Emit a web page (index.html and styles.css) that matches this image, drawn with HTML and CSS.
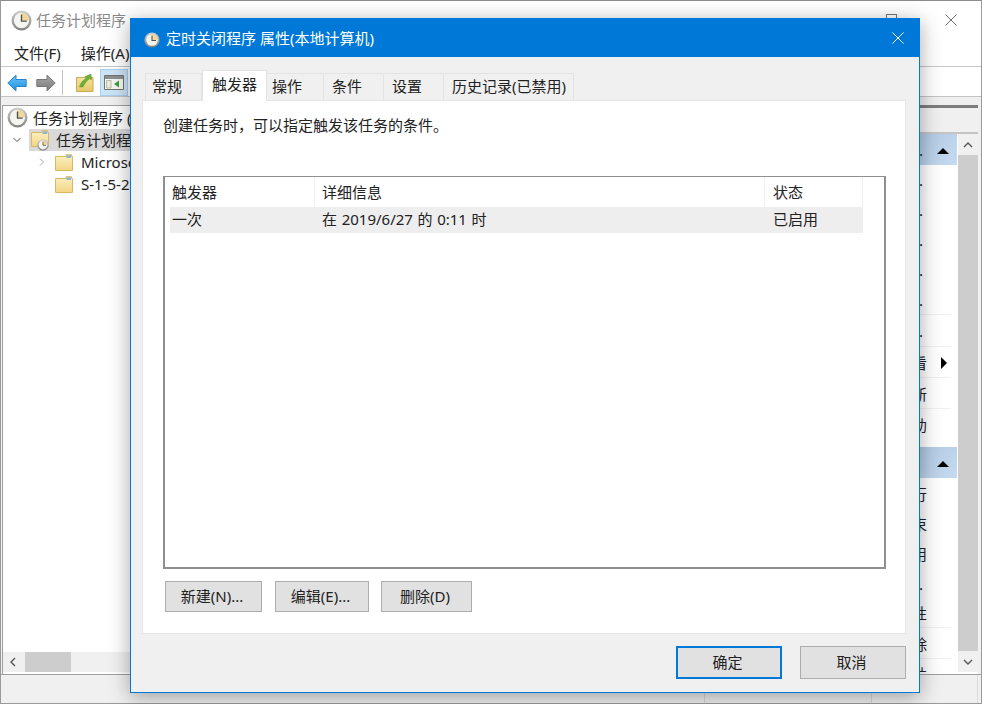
FILE: index.html
```html
<!DOCTYPE html>
<html lang="zh-CN">
<head>
<meta charset="utf-8">
<title>任务计划程序</title>
<link rel="stylesheet" href="styles.css">
</head>
<body>
<svg width="0" height="0" class="defs">
  <defs>
    <linearGradient id="clockRim" x1="0" y1="0" x2="0" y2="1">
      <stop offset="0" stop-color="#cfcfcf"/>
      <stop offset="1" stop-color="#808080"/>
    </linearGradient>
    <linearGradient id="folderFill" x1="0" y1="0" x2="0" y2="1">
      <stop offset="0" stop-color="#fdf1c4"/>
      <stop offset="1" stop-color="#f2d583"/>
    </linearGradient>
    <linearGradient id="upFill" x1="0" y1="0" x2="0" y2="1">
      <stop offset="0" stop-color="#f6e3a0"/>
      <stop offset="1" stop-color="#e6c768"/>
    </linearGradient>
    <linearGradient id="backFill" x1="0" y1="0" x2="0" y2="1">
      <stop offset="0" stop-color="#6cc4f7"/>
      <stop offset="1" stop-color="#1f8fe0"/>
    </linearGradient>
    <linearGradient id="fwdFill" x1="0" y1="0" x2="0" y2="1">
      <stop offset="0" stop-color="#a8a8a8"/>
      <stop offset="1" stop-color="#7c7c7c"/>
    </linearGradient>
    <symbol id="clock" viewBox="0 0 20 20">
      <circle cx="10" cy="10" r="9.500" fill="url(#clockRim)"/>
      <circle cx="10" cy="10" r="7.300" fill="#f4f4f0"/>
      <path d="M10 10V2.700A7.300 7.300 0 0 1 17.300 10z" fill="#f2d79a"/>
      <path d="M10 4.300V10.600H15" fill="none" stroke="#50514b" stroke-width="1.300"/>
    </symbol>
    <symbol id="folder" viewBox="0 0 18 17">
      <path d="M.5 2.500H11V.7h5.500v1.800h1V16.500H.5z" fill="url(#folderFill)" stroke="#d6b868"/>
      <path d="M11.500 1.300h4.500v2.700h-4.500z" fill="#8fb4cf"/>
    </symbol>
  </defs>
</svg>

<div class="main-window">
  <header class="main-title">
    <svg class="main-title-icon"><use href="#clock"/></svg>
    <span class="main-title-text">任务计划程序</span>
    <span class="caption-spacer"></span>
    <span class="caption-max"></span>
    <svg class="caption-close" viewBox="0 0 12 12"><path d="M.5.5l11 11M11.500.5l-11 11" stroke="#6f6f6f" fill="none"/></svg>
  </header>
  <nav class="menu-bar">
    <span class="menu-item">文件(F)</span>
    <span class="menu-item">操作(A)</span>
  </nav>
  <div class="toolbar">
    <svg class="tool-arrow" viewBox="0 0 20 18"><path d="M.8 9 9 1.200v4.300h10.200v7H9v4.300z" fill="url(#backFill)" stroke="#2a83c9" stroke-linejoin="round"/></svg>
    <svg class="tool-arrow" viewBox="0 0 20 18"><path d="M19.200 9 11 1.200v4.300H.8v7H11v4.300z" fill="url(#fwdFill)" stroke="#777" stroke-linejoin="round"/></svg>
    <span class="tool-sep"></span>
    <svg class="tool-up" viewBox="0 0 18 19"><path d="M.5 4.500h16.500v14H.5z" fill="url(#upFill)" stroke="#c9ab55"/><path d="M3.500 14C4.500 10 6.500 7.500 10 5.500L9 3.500 15 1l.5 6-2-1.200C11 7.500 9 10 7 14z" fill="#6bb037" stroke="#4f8f25" stroke-width=".4"/></svg>
    <span class="tool-active"><svg class="tool-pane" viewBox="0 0 20 15"><path d="M.5.5h19v14H.5z" fill="#f6f6f2" stroke="#73736b"/><path d="M1 1h18v3H1z" fill="#8b8f90"/><path d="M2.500 5.500h4.500v7.500H2.500z" fill="#ecebdd" stroke="#9a9a8a" stroke-width=".6"/><path d="M15 5.500v7l-5-3.500z" fill="#36a03a"/></svg></span>
  </div>
  <div class="workspace">
    <section class="tree-pane">
      <div class="tree-body">
        <div class="tree-row tree-root"><svg class="tree-clock"><use href="#clock"/></svg><span>任务计划程序 (本地)</span></div>
        <div class="tree-row tree-selected"><svg class="chev-down" viewBox="0 0 8 6"><path d="M.5 1 4 4.500 7.500 1" fill="none" stroke="#555"/></svg><span class="folder-clock"><svg class="folder-large"><use href="#folder"/></svg><svg class="folder-badge"><use href="#clock"/></svg></span><span>任务计划程序库</span></div>
        <div class="tree-row tree-child"><svg class="chev-right" viewBox="0 0 6 8"><path d="M1 .5 4.500 4 1 7.500" fill="none" stroke="#a6a6a6"/></svg><svg class="folder-icon"><use href="#folder"/></svg><span>Microsoft</span></div>
        <div class="tree-row tree-child no-chev"><svg class="folder-icon"><use href="#folder"/></svg><span>S-1-5-21</span></div>
      </div>
      <div class="hscroll">
        <svg class="scroll-left" viewBox="0 0 6 10"><path d="M5 1 1 5l4 4" fill="none" stroke="#555" stroke-width="1.400"/></svg>
        <span class="hscroll-thumb"></span>
      </div>
    </section>
    <section class="middle-pane"></section>
    <aside class="actions-pane">
      <div class="actions-top"></div>
      <div class="actions-main">
        <div class="actions-list">
          <div class="act-head"><span class="act-label act-ell">库...</span><span class="act-tri-up"></span></div>
          <div class="act-row"><span class="act-label act-ell">创建基本任务...</span></div>
          <div class="act-row"><span class="act-label act-ell">创建任务...</span></div>
          <div class="act-row"><span class="act-label act-ell">导入任务...</span></div>
          <div class="act-row"><span class="act-label act-ell">显示任务...</span></div>
          <div class="act-row act-line"><span class="act-label act-ell">启用历史...</span></div>
          <div class="act-row act-row-32 act-line"><span class="act-label act-ell">新建文件夹...</span></div>
          <div class="act-row act-row-31 act-line"><span class="act-label">查看</span><span class="act-tri-right"></span></div>
          <div class="act-row act-row-31 act-line"><span class="act-label">刷新</span></div>
          <div class="act-row act-row-32"><span class="act-label">帮助</span></div>
          <div class="act-head act-head-second"><span class="act-label"></span><span class="act-tri-up"></span></div>
          <div class="act-row act-row-31"><span class="act-label">运行</span></div>
          <div class="act-row"><span class="act-label">结束</span></div>
          <div class="act-row"><span class="act-label">禁用</span></div>
          <div class="act-row act-row-29"><span class="act-label act-ell">导出...</span></div>
          <div class="act-row act-line"><span class="act-label">属性</span></div>
          <div class="act-row act-row-31 act-line"><span class="act-label">删除</span></div>
          <div class="act-row"><span class="act-label">帮助</span></div>
        </div>
        <div class="vscroll">
          <span class="vscroll-btn"><svg class="vscroll-chev" viewBox="0 0 10 6"><path d="M1 5 5 1l4 4" fill="none" stroke="#555" stroke-width="1.400"/></svg></span>
          <span class="vscroll-thumb"></span>
          <span class="vscroll-btn"><svg class="vscroll-chev" viewBox="0 0 10 6"><path d="M1 1l4 4 4-4" fill="none" stroke="#555" stroke-width="1.400"/></svg></span>
        </div>
      </div>
    </aside>
  </div>
  <footer class="status-bar">
    <span class="status-seg status-a"></span>
    <span class="status-seg status-b"></span>
    <span class="status-seg status-c"></span>
  </footer>
</div>

<div class="dialog">
  <header class="dialog-title">
    <svg class="dialog-icon"><use href="#clock"/></svg>
    <span class="dialog-title-text">定时关闭程序 属性(本地计算机)</span>
    <svg class="dialog-close" viewBox="0 0 12 12"><path d="M.5.5l11 11M11.500.5l-11 11" stroke="#fff" fill="none"/></svg>
  </header>
  <div class="dialog-body">
    <div class="tabs">
      <span class="tab tab-general">常规</span>
      <span class="tab tab-active">触发器</span>
      <span class="tab tab-actions">操作</span>
      <span class="tab tab-mid">条件</span>
      <span class="tab tab-mid">设置</span>
      <span class="tab tab-history">历史记录(已禁用)</span>
    </div>
    <div class="tab-panel">
      <p class="panel-intro">创建任务时，可以指定触发该任务的条件。</p>
      <div class="list-view">
        <div class="list-row list-head">
          <span class="col col-trigger">触发器</span>
          <span class="col col-detail">详细信息</span>
          <span class="col col-state">状态</span>
        </div>
        <div class="list-row list-item">
          <span class="col col-trigger">一次</span>
          <span class="col col-detail col-when">在 2019/6/27 的 0:11 时</span>
          <span class="col col-state">已启用</span>
        </div>
      </div>
      <div class="panel-buttons">
        <button class="btn btn-new">新建(N)...</button>
        <button class="btn btn-edit">编辑(E)...</button>
        <button class="btn btn-del">删除(D)</button>
      </div>
    </div>
    <div class="dialog-buttons">
      <button class="btn btn-footer btn-default">确定</button>
      <button class="btn btn-footer">取消</button>
    </div>
  </div>
</div>
</body>
</html>
```

FILE: styles.css
```css
* { box-sizing: border-box; }
html, body { margin: 0; padding: 0; }
body {
  width: 982px;
  height: 704px;
  overflow: hidden;
  position: relative;
  background: #fff;
  font-family: "Noto Sans", "Noto Sans CJK SC", sans-serif;
  font-size: 15px;
  line-height: 20px;
  color: #222;
}
.defs { position: absolute; }
svg { display: block; flex: none; }

.main-window {
  width: 982px;
  height: 704px;
  display: flex;
  flex-direction: column;
  border: 1px solid #9a9a9a;
  border-top-color: #8c8c8c;
  background: #fff;
}
.main-title {
  height: 38px;
  display: flex;
  align-items: center;
  padding: 0 24px 0 10px;
  flex: none;
}
.main-title-icon { width: 21px; height: 21px; }
.main-title-text { margin-left: 4px; color: #8a8a8a; }
.caption-spacer { flex: 1; }
.caption-max { width: 11px; height: 10px; border: 1px solid #777; border-bottom: 0; margin: 13px 48px 0 0; align-self: flex-start; }
.caption-close { width: 12px; height: 12px; }
.menu-bar { height: 28px; flex: none; display: flex; align-items: center; padding-left: 13px; gap: 20px; border-bottom: 1px solid #c8c8c8; }
.toolbar { height: 30px; flex: none; display: flex; align-items: center; padding: 2px 0 0 6px; border-bottom: 1px solid #c4c4c4; }
.tool-arrow { width: 20px; height: 18px; margin-right: 9px; }
.tool-arrow + .tool-sep { margin-left: -3px; }
.tool-sep { width: 1px; height: 25px; background: #c2c2c2; margin-right: 13px; }
.tool-up { width: 18px; height: 19px; margin-right: 6px; margin-top: -1px; }
.tool-active { width: 28px; height: 27px; background: #cce4f7; border: 1px solid #a9cfee; display: flex; align-items: center; justify-content: center; margin-top: -1px; }
.tool-pane { width: 20px; height: 15px; }
.workspace { flex: 1; display: flex; padding: 8px 3px 0 1px; min-height: 0; background: #f0f0f0; }
.tree-pane { width: 130px; display: flex; flex-direction: column; border: 1px solid #a0a0a0; border-width: 1px 0 0 1px; background: #fff; padding-bottom: 2px; }
.tree-body { flex: 1; }
.tree-row { height: 22px; display: flex; align-items: center; white-space: nowrap; }
.tree-root { padding-left: 4px; height: 23px; }
.tree-clock { width: 21px; height: 21px; margin-right: 5px; }
.tree-selected { padding-left: 10px; background: linear-gradient(#d9d9d9, #d9d9d9) no-repeat 26px 0 / 104px 100%; }
.chev-down { width: 8px; height: 6px; margin-right: 10px; }
.folder-clock { position: relative; width: 20px; height: 20px; margin-right: 7px; }
.folder-large { width: 18px; height: 17px; }
.folder-badge { position: absolute; right: 0; bottom: -1px; width: 12px; height: 12px; }
.tree-child { padding-left: 36px; }
.no-chev { padding-left: 52px; }
.chev-right { width: 6px; height: 8px; margin-right: 10px; }
.folder-icon { width: 18px; height: 17px; margin-right: 8px; }
.hscroll { height: 20px; flex: none; background: #f0f0f0; display: flex; align-items: center; }
.scroll-left { width: 6px; height: 10px; margin: 0 9px 0 7px; }
.hscroll-thumb { width: 46px; height: 20px; background: #cdcdcd; }
.middle-pane { flex: 1; }
.actions-pane { width: 178px; display: flex; flex-direction: column; }
.actions-top { height: 29px; flex: none; border-top: 3px solid #7d7d7d; border-bottom: 2px solid #c4c4c4; background: #f0f0f0; }
.actions-main { flex: 1; display: flex; min-height: 0; gap: 1px; background: #fff; padding-bottom: 2px; }
.actions-list { flex: 1; overflow: hidden; }
.act-head { height: 31px; background: linear-gradient(135deg, #8aa8ca, #c6dbf0); display: flex; justify-content: space-between; align-items: center; padding-right: 8px; }
.act-head-second { margin-top: 6px; }
.act-tri-up { width: 0; height: 0; border-left: 6px solid transparent; border-right: 6px solid transparent; border-bottom: 6px solid #000; margin-top: 2px; }
.act-tri-right { width: 0; height: 0; border-top: 6px solid transparent; border-bottom: 6px solid transparent; border-left: 6px solid #000; position: absolute; right: 10px; top: 10px; }
.act-row { height: 30px; position: relative; display: flex; align-items: center; white-space: nowrap; }
.act-row-29 { height: 29px; }
.act-row-31 { height: 31px; }
.act-row-32 { height: 32px; }
.act-label { display: block; width: 127px; flex: none; text-align: right; white-space: nowrap; height: 20px; }
.act-ell { padding-right: 4px; }
.act-line { background: linear-gradient(#f0f0f0, #f0f0f0) no-repeat 0 100% / 151px 1px; }
.vscroll { width: 20px; flex: none; display: flex; flex-direction: column; background: #f0f0f0; }
.vscroll-btn { height: 21px; flex: none; display: flex; align-items: center; justify-content: center; }
.vscroll-chev { width: 10px; height: 6px; }
.vscroll-thumb { flex: 1; background: #cdcdcd; }
.status-bar { height: 29px; flex: none; display: flex; background: #f0f0f0; border-top: 1px solid #a0a0a0; }
.status-seg { display: block; border-right: 1px solid #d9d9d9; }
.status-a { width: 704px; }
.status-b { width: 167px; }
.status-c { width: 106px; }

.dialog {
  position: absolute;
  left: 130px;
  top: 18px;
  width: 790px;
  height: 675px;
  border: 1px solid #0078d7;
  display: flex;
  flex-direction: column;
  background: #f0f0f0;
  box-shadow: 0 4px 20px rgba(0,0,0,.35);
}
.dialog-title {
  height: 38px;
  flex: none;
  background: #0078d7;
  display: flex;
  align-items: center;
  padding: 0 15px 0 13px;
  color: #fff;
}
.dialog-icon { width: 16px; height: 16px; margin-top: 3px; }
.dialog-title-text { margin-left: 6px; flex: 1; }
.dialog-close { width: 12px; height: 12px; }
.dialog-body { flex: 1; display: flex; flex-direction: column; padding: 13px 13px 0 11px; min-height: 0; }
.tabs { display: flex; height: 30px; align-items: flex-end; flex: none; padding-left: 3px; position: relative; z-index: 1; }
.tab { height: 27px; line-height: 24px; background: #f0f0f0; border: 1px solid #e3e3e3; border-bottom: 0; border-left-width: 0; white-space: nowrap; }
.tab-general { width: 57px; padding-left: 6px; border-left-width: 1px; }
.tab-active { width: 65px; height: 31px; line-height: 27px; padding-left: 9px; background: #fff; border-left-width: 1px; position: relative; top: 1px; }
.tab-actions { width: 57px; padding-left: 5px; }
.tab-mid { width: 60px; padding-left: 8px; }
.tab-history { width: 130px; padding-left: 8px; }
.tab-panel { height: 534px; flex: none; background: #fff; border: 1px solid #e6e6e6; padding: 14px 19px 0 20px; display: flex; flex-direction: column; }
.panel-intro { margin: 0; height: 20px; line-height: 20px; }
.list-view { height: 393px; margin-top: 41px; flex: none; border: 2px solid #8f8f8f; border-top-width: 1px; padding: 0 0 0 5px; }
.list-row { display: flex; width: 693px; }
.list-head { height: 30px; }
.list-item { height: 26px; background: #eeeeee; }
.col { line-height: 25px; padding-left: 2px; white-space: nowrap; }
.list-head .col { line-height: 30px; border-right: 1px solid #f0f0f0; }
.col-trigger { width: 145px; }
.col-detail { width: 450px; padding-left: 7px; }
.col-when { word-spacing: .75px; }
.col-state { width: 98px; padding-left: 8px; }
.panel-buttons { display: flex; gap: 13px; margin: 12px 0 0 2px; }
.btn { height: 31px; background: #e1e1e1; border: 1px solid #adadad; font: inherit; color: inherit; padding: 0 3px 2px 0; }
.btn-new { width: 97px; }
.btn-edit { width: 94px; }
.btn-del { width: 91px; margin-left: -1px; }
.dialog-buttons { display: flex; justify-content: flex-end; gap: 18px; margin-top: 12px; }
.btn-footer { width: 106px; height: 33px; }
.btn-default { border: 2px solid #0078d7; }
```
